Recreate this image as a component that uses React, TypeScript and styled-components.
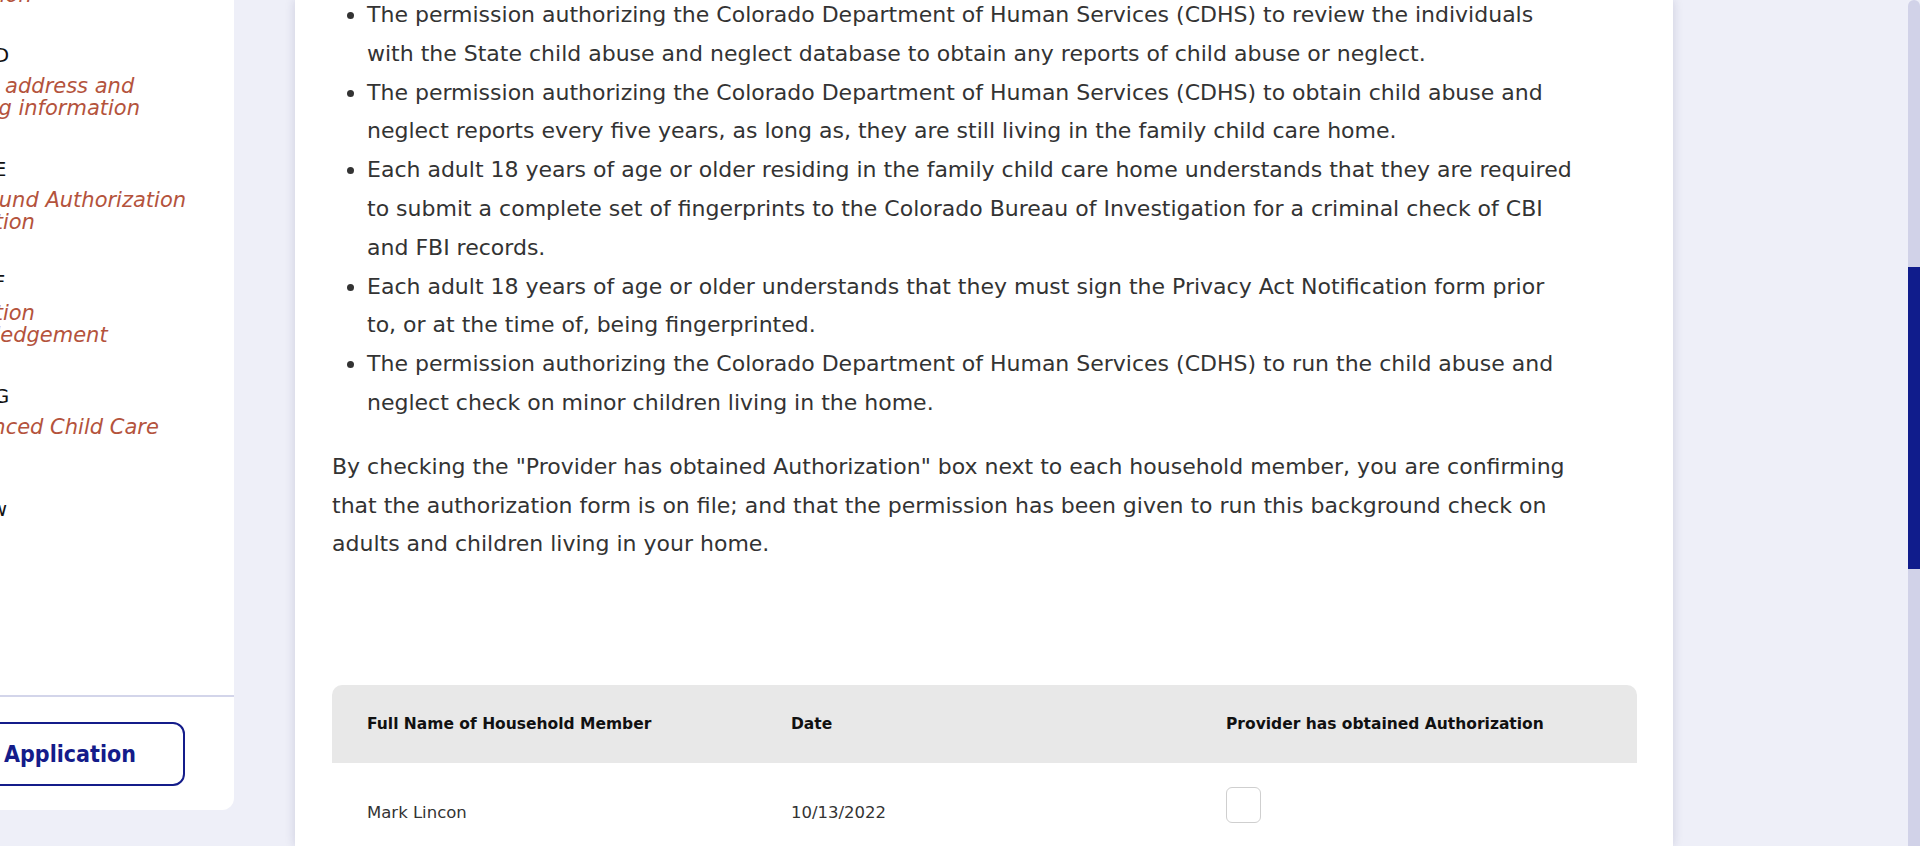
import React from "react";
import styled, { createGlobalStyle } from "styled-components";

const GlobalStyle = createGlobalStyle`
  html, body {
    margin: 0;
    padding: 0;
    height: 100%;
    overflow: hidden;
    background: #eeeff8;
  }
  #root { height: 100%; }
`;

const Page = styled.div`
  display: flex;
  width: 1920px;
  height: 846px;
  overflow: hidden;
  background: #eeeff8;
  font-family: "DejaVu Sans", sans-serif;
`;

const Sidebar = styled.aside`
  width: 234px;
  height: 810px;
  flex-shrink: 0;
  background: #ffffff;
  border-bottom-right-radius: 12px;
  display: flex;
  flex-direction: column;
  overflow: hidden;
`;

const Nav = styled.nav`
  height: 695px;
  flex-shrink: 0;
  overflow: hidden;
`;

const NavList = styled.ol`
  list-style: none;
  margin: -70.5px 0 0 -87px;
  padding: 0;
  width: 440px;
  display: flex;
  flex-direction: column;
  gap: 37.5px;
`;

const NavItem = styled.li`
  min-height: 76px;
  display: flex;
  flex-direction: column;
`;

const StepLabel = styled.span`
  font-size: 20px;
  line-height: 24px;
  color: #111111;
  white-space: nowrap;
`;

const StepTitle = styled.span`
  margin-top: 8px;
  display: flex;
  flex-direction: column;
  font-style: italic;
  font-size: 21px;
  line-height: 22px;
  color: #b4533c;
  white-space: nowrap;
`;

const SidebarFooter = styled.div`
  flex: 1;
  border-top: 2px solid #d3d5ea;
  display: flex;
  justify-content: flex-end;
  align-items: flex-start;
  padding: 25px 49px 0 0;
`;

const OutlineButton = styled.button`
  height: 64px;
  padding: 0 47px 0 52px;
  border: 2.5px solid #141c8a;
  border-radius: 12px;
  background: #ffffff;
  color: #141c8a;
  font-family: "DejaVu Sans Condensed", "DejaVu Sans", sans-serif;
  font-weight: bold;
  font-size: 23px;
  white-space: nowrap;
  flex-shrink: 0;
`;

const MainCard = styled.main`
  width: 1378px;
  height: 846px;
  margin-left: 61px;
  flex-shrink: 0;
  box-sizing: border-box;
  padding: 0 36px 0 37px;
  background: #ffffff;
  box-shadow: 0 0 10px rgba(30, 30, 90, 0.16);
  overflow: hidden;
  color: #333333;
`;

const BulletList = styled.ul`
  margin: -4px 0 0;
  padding-left: 35px;
  font-size: 22px;
  line-height: 38.8px;
`;

const Bullet = styled.li`
  white-space: nowrap;
`;

const Paragraph = styled.p`
  margin: 25px 0 0;
  font-size: 22px;
  line-height: 38.8px;
  white-space: nowrap;
`;

const Table = styled.div`
  margin-top: 121px;
`;

const HeaderRow = styled.div`
  display: grid;
  grid-template-columns: 424px 435px 1fr;
  align-items: center;
  height: 78px;
  padding-left: 35px;
  background: #e8e8e8;
  border-radius: 10px 10px 0 0;
  font-weight: bold;
  font-size: 15.5px;
  color: #111111;
`;

const BodyRow = styled.div`
  display: grid;
  grid-template-columns: 424px 435px 1fr;
  align-items: start;
  padding: 24px 0 0 35px;
  font-size: 16.5px;
  line-height: 20px;
  color: #333333;
`;

const Cell = styled.div<{ $offset?: number }>`
  margin-top: ${(p) => p.$offset ?? 0}px;
`;

const CheckBox = styled.span`
  display: block;
  width: 35px;
  height: 36px;
  box-sizing: border-box;
  border: 1px solid #cfcfcf;
  border-radius: 6px;
  background: #ffffff;
`;

const Spacer = styled.div`
  flex: 1;
`;

const ScrollTrack = styled.div`
  width: 12px;
  height: 846px;
  flex-shrink: 0;
  display: flex;
  flex-direction: column;
  background: #d1d2e8;
  border-radius: 6px 6px 0 0;
`;

const ScrollThumb = styled.div`
  margin-top: 267px;
  height: 302px;
  background: #101c8c;
`;

const steps = [
  { label: "Section C", lines: ["Provider Identity", "Verification"] },
  { label: "Section D", lines: ["Physical address and", "Licensing information"] },
  { label: "Section E", lines: ["Background Authorization", "Information"] },
  { label: "Section F", lines: ["Information", "Acknowledgement"] },
  { label: "Section G", lines: ["Experienced Child Care"] },
  { label: "Overview", lines: [] as string[] },
];

const bullets: string[][] = [
  [
    "The permission authorizing the Colorado Department of Human Services (CDHS) to review the individuals",
    "with the State child abuse and neglect database to obtain any reports of child abuse or neglect.",
  ],
  [
    "The permission authorizing the Colorado Department of Human Services (CDHS) to obtain child abuse and",
    "neglect reports every five years, as long as, they are still living in the family child care home.",
  ],
  [
    "Each adult 18 years of age or older residing in the family child care home understands that they are required",
    "to submit a complete set of fingerprints to the Colorado Bureau of Investigation for a criminal check of CBI",
    "and FBI records.",
  ],
  [
    "Each adult 18 years of age or older understands that they must sign the Privacy Act Notification form prior",
    "to, or at the time of, being fingerprinted.",
  ],
  [
    "The permission authorizing the Colorado Department of Human Services (CDHS) to run the child abuse and",
    "neglect check on minor children living in the home.",
  ],
];

const paragraph = [
  'By checking the "Provider has obtained Authorization" box next to each household member, you are confirming',
  "that the authorization form is on file; and that the permission has been given to run this background check on",
  "adults and children living in your home.",
];

const Lines = ({ lines }: { lines: string[] }) => (
  <>
    {lines.map((l, i) => (
      <React.Fragment key={i}>
        {i > 0 && <br />}
        {l}
      </React.Fragment>
    ))}
  </>
);

export default function App() {
  return (
    <>
      <GlobalStyle />
      <Page>
        <Sidebar>
          <Nav>
            <NavList>
              {steps.map((s) => (
                <NavItem key={s.label}>
                  <StepLabel>{s.label}</StepLabel>
                  {s.lines.length > 0 && (
                    <StepTitle>
                      {s.lines.map((l) => (
                        <span key={l}>{l}</span>
                      ))}
                    </StepTitle>
                  )}
                </NavItem>
              ))}
            </NavList>
          </Nav>
          <SidebarFooter>
            <OutlineButton type="button">Submit Application</OutlineButton>
          </SidebarFooter>
        </Sidebar>

        <MainCard>
          <BulletList>
            {bullets.map((b, i) => (
              <Bullet key={i}>
                <Lines lines={b} />
              </Bullet>
            ))}
          </BulletList>
          <Paragraph>
            <Lines lines={paragraph} />
          </Paragraph>
          <Table>
            <HeaderRow>
              <span>Full Name of Household Member</span>
              <span>Date</span>
              <span>Provider has obtained Authorization</span>
            </HeaderRow>
            <BodyRow>
              <Cell $offset={16}>Mark Lincon</Cell>
              <Cell $offset={16}>10/13/2022</Cell>
              <Cell>
                <CheckBox role="checkbox" aria-checked="false" />
              </Cell>
            </BodyRow>
          </Table>
        </MainCard>

        <Spacer />
        <ScrollTrack>
          <ScrollThumb />
        </ScrollTrack>
      </Page>
    </>
  );
}
